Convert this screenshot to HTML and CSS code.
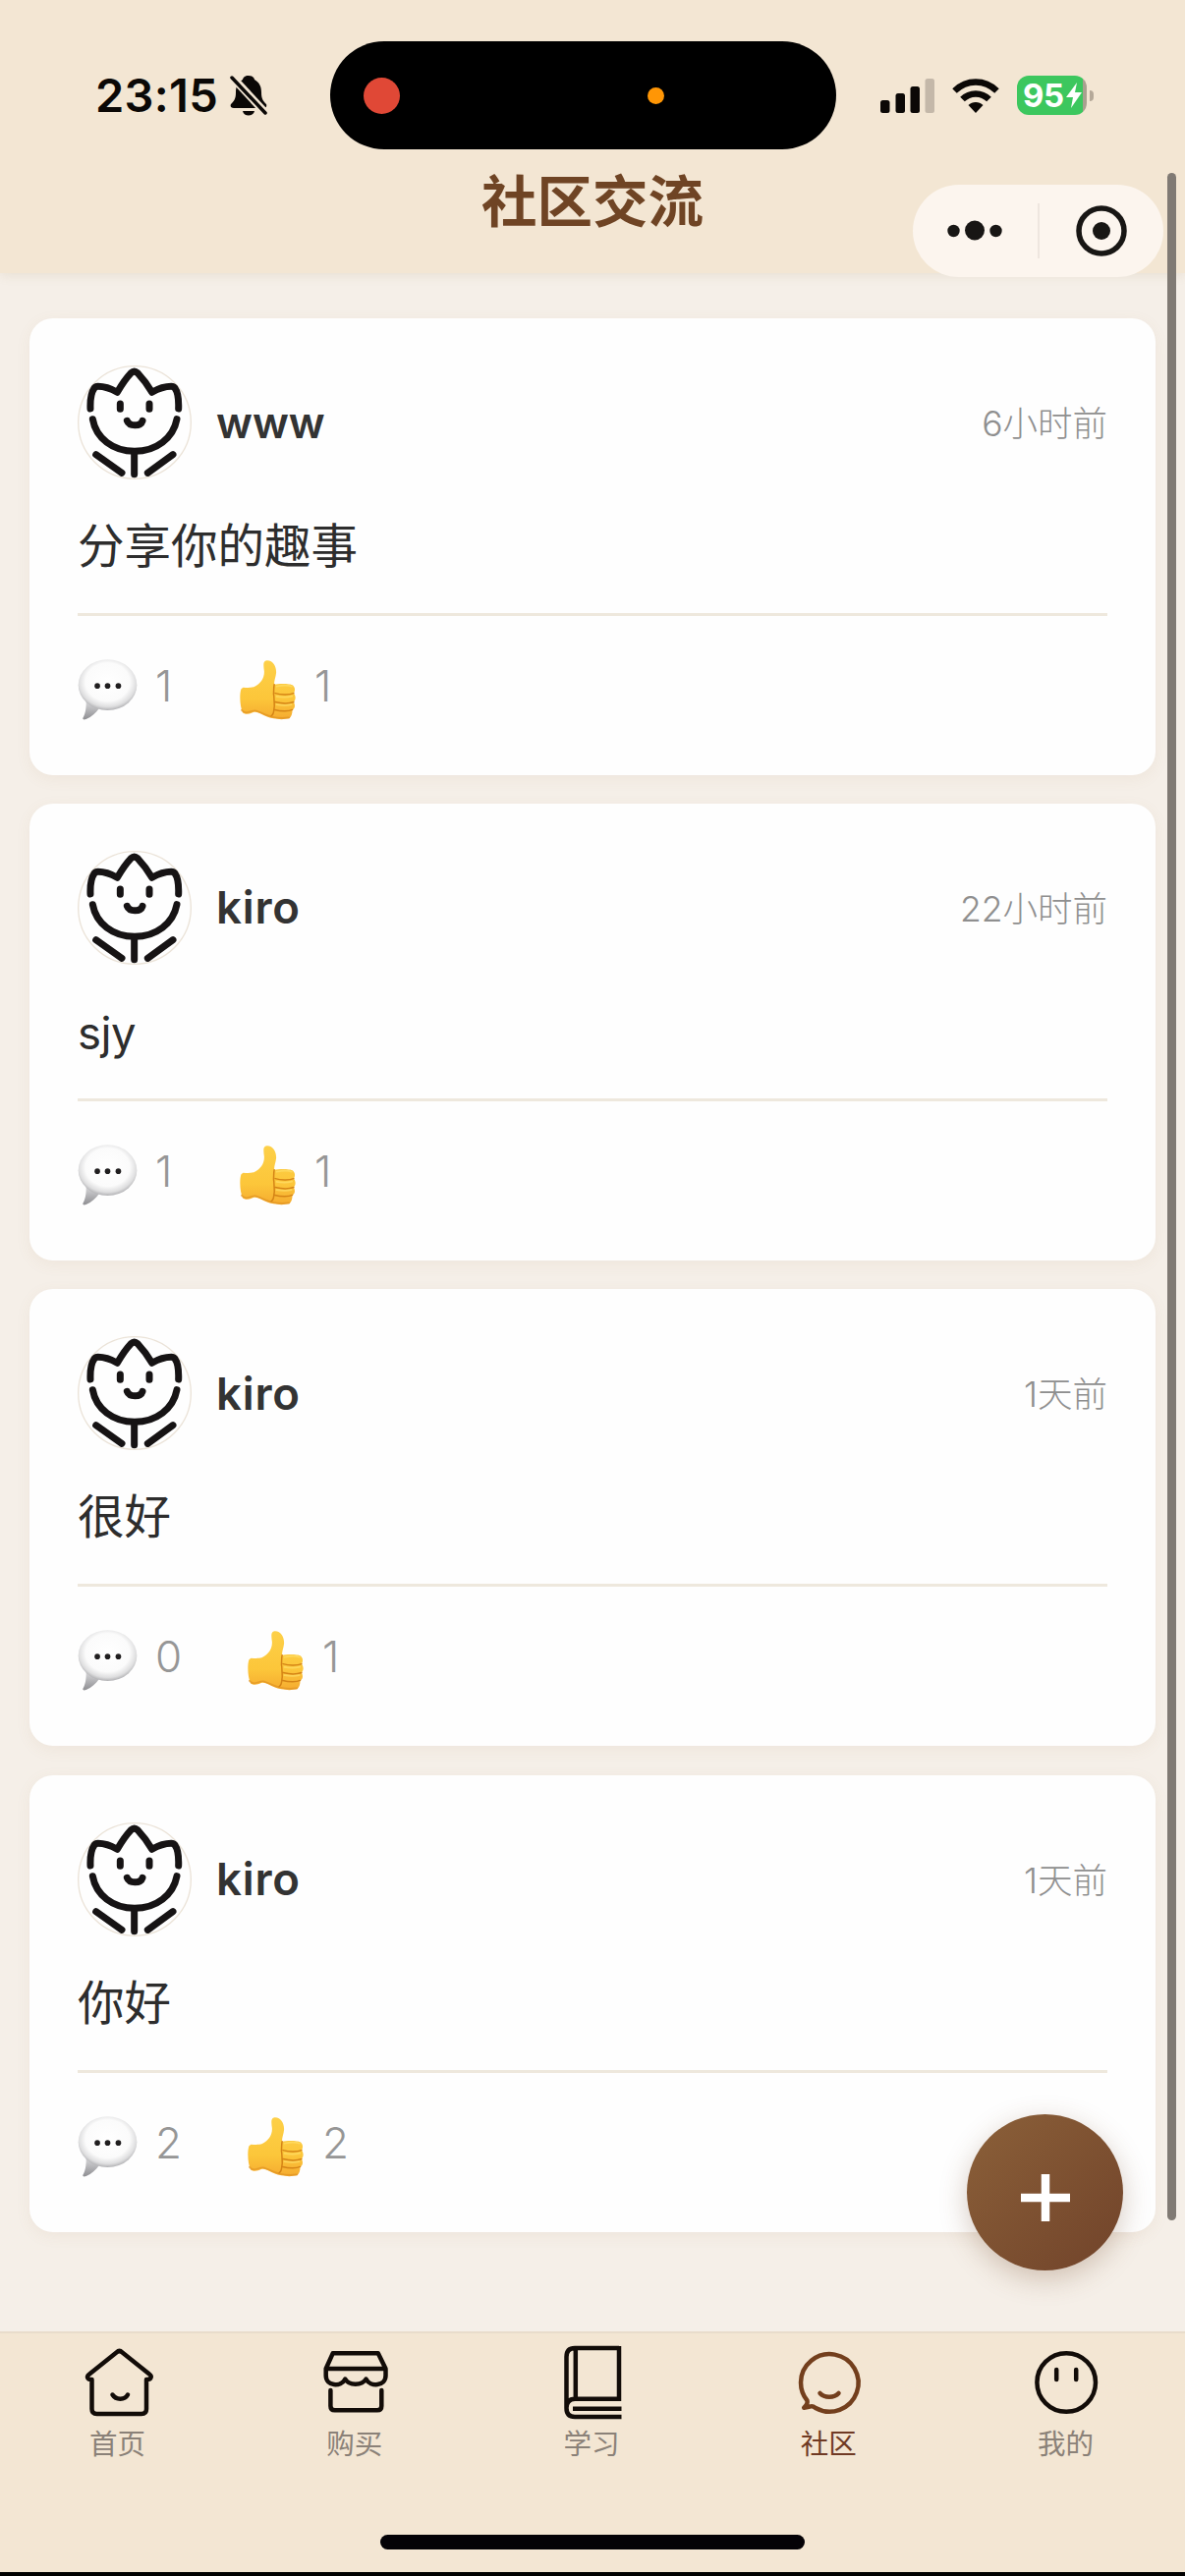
FILE: index.html
```html
<!DOCTYPE html>
<html lang="zh-CN">
<head>
<meta charset="utf-8">
<title>社区交流</title>
<link rel="stylesheet" href="styles.css">
</head>
<body>
<svg class="defs" aria-hidden="true">
  <defs>
    <radialGradient id="bubbleFill" cx="50%" cy="44%" r="57%">
      <stop offset="0" stop-color="#fff"/><stop offset=".66" stop-color="#fbfbfb"/><stop offset=".86" stop-color="#dededf"/><stop offset="1" stop-color="#a9a9ac"/>
    </radialGradient>
    <linearGradient id="tailFill" x1="0" y1="0" x2="0" y2="1">
      <stop offset="0" stop-color="#d8d8da"/><stop offset="1" stop-color="#8e8e92"/>
    </linearGradient>
    <linearGradient id="thumbFill" x1="0" y1="0" x2="0" y2="1">
      <stop offset="0" stop-color="#fdd048"/><stop offset=".65" stop-color="#fcc63a"/><stop offset="1" stop-color="#f5ab30"/>
    </linearGradient>
    <symbol id="flower" viewBox="176 185 348 348">
      <circle cx="350" cy="359" r="172" fill="none" stroke="#ebe3d8" stroke-width="4"/>
      <g fill="none" stroke="#161314" stroke-width="21" stroke-linecap="round" stroke-linejoin="round">
        <path d="M215 317C214 290 217 268 227 254Q231 249 238 249C258 249 278 256 297 267C308 248 323 225 339 208Q349 199 359 208C375 225 392 248 403 267C422 256 442 249 462 249Q469 249 473 254C483 268 485 290 484 317"/>
        <path d="M222 349C232 407 284 447 350 447S468 407 479 349"/>
        <path d="M306 302V318M395 302V318"/>
        <path d="M327 354C334 372 368 372 374 354"/>
        <path d="M349 450V517M232 457L311 513M467 457L390 513"/>
      </g>
    </symbol>
    <symbol id="bubble" viewBox="180 211 184 187">
      <path d="M206 340C207 362 203 381 196 392C196 397 200 397 206 395C223 388 237 376 246 362Z" fill="url(#tailFill)"/>
      <ellipse cx="272" cy="290" rx="90" ry="78" fill="url(#bubbleFill)"/>
      <g fill="#201e1f"><circle cx="240.500" cy="293" r="8.500"/><circle cx="272" cy="293" r="8.500"/><circle cx="305" cy="293" r="8.500"/></g>
    </symbol>
    <symbol id="thumb" viewBox="667 211 178 188">
      <path d="M680 298C693 299 706 299 713 297C734 286 746 270 745 248C743 231 740 216 753 215C773 214 783 235 782 253C781 267 775 278 776 289C790 286 827 286 834 292C841 298 841 309 836 316C843 322 843 337 836 343C841 350 841 363 832 367C832 379 829 389 822 394C800 399 771 396 752 388C739 382 724 371 711 375C701 380 688 383 679 376C670 358 668 319 674 303Z" fill="url(#thumbFill)"/>
      <path d="M776 289C774 300 775 306 774 318C776 327 775 333 776 344C777 353 777 358 775 366C775 377 772 383 766 387M779 316C798 322 824 321 836 316M779 343C800 348 825 347 836 343M778 367C798 373 821 372 832 367" fill="none" stroke="#d58416" stroke-width="4.500" stroke-linecap="round"/>
      <path d="M783 295C797 292 820 291 830 295M783 326C799 329 820 328 831 325M783 351C799 354 820 353 829 351" fill="none" stroke="#ffe16c" stroke-width="5" stroke-linecap="round" opacity=".65"/>
      <path d="M675 368C690 386 705 366 721 370C741 378 770 398 822 391" fill="none" stroke="#e09322" stroke-width="5" stroke-linecap="round" opacity=".7"/>
    </symbol>
  </defs>
</svg>

<div class="phone">
  <header class="header">
    <div class="status">
      <div class="clock">
        <span class="time">23:15</span>
        <svg class="bell" viewBox="0 0 38 42">
          <path d="M19 1C23 1 24.500 3 25 5C30 8 32 12 32 18C32 25 34 27 37 30C38 33 36 34 34 34H4C1 34 0 32 1 30C4 27 6 25 6 18C6 12 8 8 13 5C13.500 3 15 1 19 1ZM13 37H25C24 43 14 43 13 37Z" fill="#0b0806"/>
          <path d="M1 1L38 41" stroke="#f3e6d3" stroke-width="8"/>
          <path d="M2 3L36 39" stroke="#0b0806" stroke-width="3.500" stroke-linecap="round"/>
        </svg>
      </div>
      <div class="island"><i class="rec"></i><i class="mic"></i></div>
      <div class="signals">
        <svg class="cell" viewBox="0 0 55 35">
          <g fill="#0b0806"><rect y="22" width="9.500" height="13" rx="2.500"/><rect x="15.500" y="15" width="9.500" height="20" rx="2.500"/><rect x="30.500" y="8" width="9.500" height="27" rx="2.500"/></g>
          <rect x="45.500" width="9.500" height="35" rx="2.500" fill="#c4b8a9"/>
        </svg>
        <svg class="wifi" viewBox="0 0 48 35">
          <g fill="none" stroke="#0b0806" stroke-width="6.500"><path d="M2.500 12.500C15 .500 33 .500 45.500 12.500"/><path d="M10.500 21C18 13.500 30 13.500 37.500 21"/></g>
          <path d="M24 35L16.500 27C20.500 23 27.500 23 31.500 27Z" fill="#0b0806"/>
        </svg>
        <div class="battery">
          <span>95</span>
          <svg class="bolt" viewBox="0 0 16 26"><path d="M11 0L0 15H7L5 26L16 10H9Z" fill="#fff"/></svg>
        </div>
        <i class="nub"></i>
      </div>
    </div>
    <h1 class="title">社区交流</h1>
    <div class="capsule">
      <svg class="more" viewBox="0 0 56 22"><g fill="#181614"><circle cx="6.500" cy="11" r="6.200"/><circle cx="28" cy="10.500" r="10"/><circle cx="49.500" cy="11" r="6.200"/></g></svg>
      <i class="split"></i>
      <svg class="target" viewBox="0 0 52 52"><circle cx="26" cy="26" r="23" fill="none" stroke="#181614" stroke-width="5.500"/><circle cx="26" cy="26" r="9" fill="#181614"/></svg>
    </div>
  </header>

  <main class="feed">
    <article class="card">
      <div class="author"><svg class="avatar"><use href="#flower"/></svg><span class="name">www</span><time class="ago">6小时前</time></div>
      <p class="text">分享你的趣事</p>
      <div class="actions">
        <div class="action"><svg class="bubble"><use href="#bubble"/></svg><span class="count one">1</span></div>
        <div class="action"><svg class="thumb"><use href="#thumb"/></svg><span class="count one">1</span></div>
      </div>
    </article>
    <article class="card">
      <div class="author"><svg class="avatar"><use href="#flower"/></svg><span class="name wide">kiro</span><time class="ago">22小时前</time></div>
      <p class="text latin">sjy</p>
      <div class="actions">
        <div class="action"><svg class="bubble"><use href="#bubble"/></svg><span class="count one">1</span></div>
        <div class="action"><svg class="thumb"><use href="#thumb"/></svg><span class="count one">1</span></div>
      </div>
    </article>
    <article class="card">
      <div class="author"><svg class="avatar"><use href="#flower"/></svg><span class="name wide">kiro</span><time class="ago">1天前</time></div>
      <p class="text">很好</p>
      <div class="actions">
        <div class="action"><svg class="bubble"><use href="#bubble"/></svg><span class="count">0</span></div>
        <div class="action"><svg class="thumb"><use href="#thumb"/></svg><span class="count one">1</span></div>
      </div>
    </article>
    <article class="card">
      <div class="author"><svg class="avatar"><use href="#flower"/></svg><span class="name wide">kiro</span><time class="ago">1天前</time></div>
      <p class="text">你好</p>
      <div class="actions">
        <div class="action"><svg class="bubble"><use href="#bubble"/></svg><span class="count">2</span></div>
        <div class="action"><svg class="thumb"><use href="#thumb"/></svg><span class="count">2</span></div>
      </div>
    </article>
  </main>

  <nav class="tabbar">
    <div class="tabs">
      <div class="tab">
        <svg class="icon" viewBox="0 0 80 80"><path d="M12.500 36V66Q12.500 71 17.500 71H63Q68 71 68 66V36C73 36.500 74 32.500 71 30.500L43.500 8.500Q40.500 5.500 37.500 8.500L10 30.500C6.500 33 8 36.500 12.500 36M33.500 51.500C37 57 46 57 49 51.500"/></svg>
        <span>首页</span>
      </div>
      <div class="tab">
        <svg class="icon" viewBox="0 0 80 80"><path d="M9.700 25L16.700 9.300H62.800L70.500 25ZM9.700 25V32C9.700 43 25 44 29.300 35.500C33 42.500 46.500 42.500 50.500 35.500C55 44 70.500 43 70.500 32V25M14.400 47V63Q14.400 67.300 18.700 67.300H62Q66.300 67.300 66.300 63V47"/></svg>
        <span>购买</span>
      </div>
      <div class="tab">
        <svg class="icon book" viewBox="0 0 80 80"><path d="M67 4H22Q13.500 4 13.500 13V65Q13.500 74 22 74H69.500M67 2V55.700H22Q13.500 56 13.500 65M22.800 4V55.700M20 65.700H69.500"/></svg>
        <span>学习</span>
      </div>
      <div class="tab active">
        <svg class="icon" viewBox="0 0 80 80"><path d="M17.500 57.500C13 52 11 46 11 39A29.300 29.300 0 1 1 26 65Q23 62.500 20.500 63.500L14.200 64.700Q18.500 61 17.500 57.500ZM30.500 50C35 55 45 55 49.500 50"/></svg>
        <span>社区</span>
      </div>
      <div class="tab">
        <svg class="icon" viewBox="0 0 80 80"><circle cx="40.200" cy="39" r="29.800"/><path d="M30.200 26V36M50.200 26V36"/></svg>
        <span>我的</span>
      </div>
    </div>
    <div class="home-indicator"></div>
  </nav>

  <div class="fab"><svg viewBox="0 0 50 50"><path d="M25 1V49M0 25H50" stroke="#fff" stroke-width="8.500"/></svg></div>
  <div class="scrollbar"></div>
</div>
</body>
</html>
```
FILE: styles.css
```css
* { box-sizing: border-box; }

body {
  margin: 0;
  background: #f5efe8;
  font-family: Inter, "Noto Sans CJK SC", sans-serif;
}

svg { display: block; flex: none; }
.defs { position: absolute; width: 0; height: 0; }

.phone {
  position: relative;
  display: flex;
  flex-direction: column;
  width: 1206px;
  height: 2622px;
  overflow: hidden;
}

/* header */
.header {
  position: relative;
  height: 278px;
  padding-top: 42px;
  background: #f3e6d3;
  box-shadow: 0 3px 10px rgba(160, 130, 80, .12);
}

.status {
  display: grid;
  grid-template-columns: 336px 515px 1fr;
  align-items: center;
  height: 110px;
}

.clock {
  display: flex;
  align-items: center;
  gap: 9px;
  padding-left: 97px;
}

.time {
  width: 128px;
  font-size: 47px;
  line-height: 56px;
  font-weight: 600;
  letter-spacing: .3px;
  white-space: nowrap;
  color: #0b0806;
}

.bell { width: 38px; height: 42px; }

.island {
  display: flex;
  align-items: center;
  justify-content: space-between;
  height: 110px;
  padding: 0 175px 0 34px;
  border-radius: 55px;
  background: #000;
}

.rec { width: 37px; height: 37px; border-radius: 50%; background: #e04836; }
.mic { width: 17px; height: 17px; border-radius: 50%; background: #ff9605; }

.signals {
  display: flex;
  align-items: center;
  padding-left: 45px;
}

.cell { width: 55px; height: 35px; }
.wifi { width: 48px; height: 35px; margin-left: 18px; }

.battery {
  display: flex;
  align-items: center;
  gap: 2px;
  width: 71px;
  height: 40px;
  margin-left: 18px;
  padding-left: 6px;
  border-radius: 12px;
  background: linear-gradient(90deg, #3cc75e 67px, #a9a08f 67px);
  color: #fff;
  font-size: 33px;
  line-height: 40px;
  font-weight: 700;
  letter-spacing: -.5px;
}

.bolt { width: 16px; height: 26px; }
.nub { width: 4px; height: 11px; margin-left: 3px; border-radius: 0 4px 4px 0; background: #b5a999; }

.title {
  margin: 14px 0 0;
  font-size: 56.500px;
  line-height: 80px;
  font-weight: 700;
  text-align: center;
  color: #6f4424;
}

.capsule {
  position: absolute;
  top: 188px;
  left: 929px;
  display: flex;
  align-items: center;
  width: 255px;
  height: 94px;
  padding-left: 35px;
  border-radius: 47px;
  background: #fcf5ee;
}

.more { width: 56px; height: 22px; }
.split { width: 2px; height: 56px; margin: 0 37px 0 36px; background: #eee6df; }
.target { width: 52px; height: 52px; }

/* feed */
.feed {
  flex: 1;
  display: flex;
  flex-direction: column;
  gap: 29.400px;
  padding: 45.500px 30px 0;
}

.card {
  display: flex;
  flex-direction: column;
  height: 465px;
  padding: 48px 49px 0;
  border-radius: 24px;
  background: #fefefe;
  box-shadow: 0 4px 16px rgba(150, 115, 70, .07);
}

.author { display: flex; align-items: center; height: 116px; }

.avatar { width: 116px; height: 116px; }

.name {
  margin-left: 25px;
  color: #333;
  font-size: 44px;
  font-weight: 600;
}

.name.wide { font-size: 45.500px; letter-spacing: .8px; }

.ago {
  margin: -3px 0 0 auto;
  color: #8f8f8f;
  font-size: 35.500px;
  font-weight: 300;
}

.text {
  height: 139px;
  margin: 0;
  padding-top: 30px;
  border-bottom: 3px solid #eee8dd;
  color: #2d2d2d;
  font-size: 47.500px;
  line-height: 76px;
  font-weight: 400;
}

.text.latin { font-size: 45.500px; letter-spacing: -.5px; line-height: 79px; }

.actions { display: flex; gap: 64px; padding-top: 44px; }
.action { display: flex; align-items: flex-start; }
.bubble { width: 61px; height: 62px; }
.thumb { width: 59px; height: 62px; }

.count {
  width: 29px;
  margin-left: 18px;
  color: #969696;
  font-size: 44px;
  line-height: 54px;
  font-weight: 300;
}

.count.one { width: 21px; }

/* bottom tabs */
.tabbar {
  height: 249px;
  border-top: 2px solid #e8dccb;
  border-bottom: 4px solid #000;
  background: #f3e6d3;
}

.tabs { display: grid; grid-template-columns: repeat(5, 1fr); padding-top: 11px; }

.tab {
  display: flex;
  flex-direction: column;
  align-items: center;
  color: #8a8178;
  font-size: 28.500px;
  line-height: 40px;
}

.tab span { margin: 2px 2px 0 0; }

.icon {
  width: 80px;
  height: 80px;
  fill: none;
  stroke: #120c08;
  stroke-width: 4.500;
  stroke-linecap: round;
  stroke-linejoin: round;
}

.book { stroke-linecap: butt; stroke-linejoin: miter; }
.active { color: #6f3a24; }
.active .icon { stroke: #733f1d; }

.home-indicator {
  width: 432px;
  height: 15px;
  margin: 72px auto 0;
  border-radius: 8px;
  background: #040206;
}

/* floating layers */
.fab {
  position: absolute;
  top: 2152px;
  left: 984px;
  display: flex;
  justify-content: center;
  width: 159px;
  height: 159px;
  padding-top: 60px;
  border-radius: 50%;
  background: linear-gradient(135deg, #8b6039, #71432a);
  box-shadow: 0 8px 28px rgba(111, 68, 36, .28);
}

.fab svg { width: 50px; height: 50px; }

.scrollbar {
  position: absolute;
  top: 176px;
  left: 1188px;
  width: 9px;
  height: 2084px;
  border-radius: 5px;
  background: #807a74;
}
```
